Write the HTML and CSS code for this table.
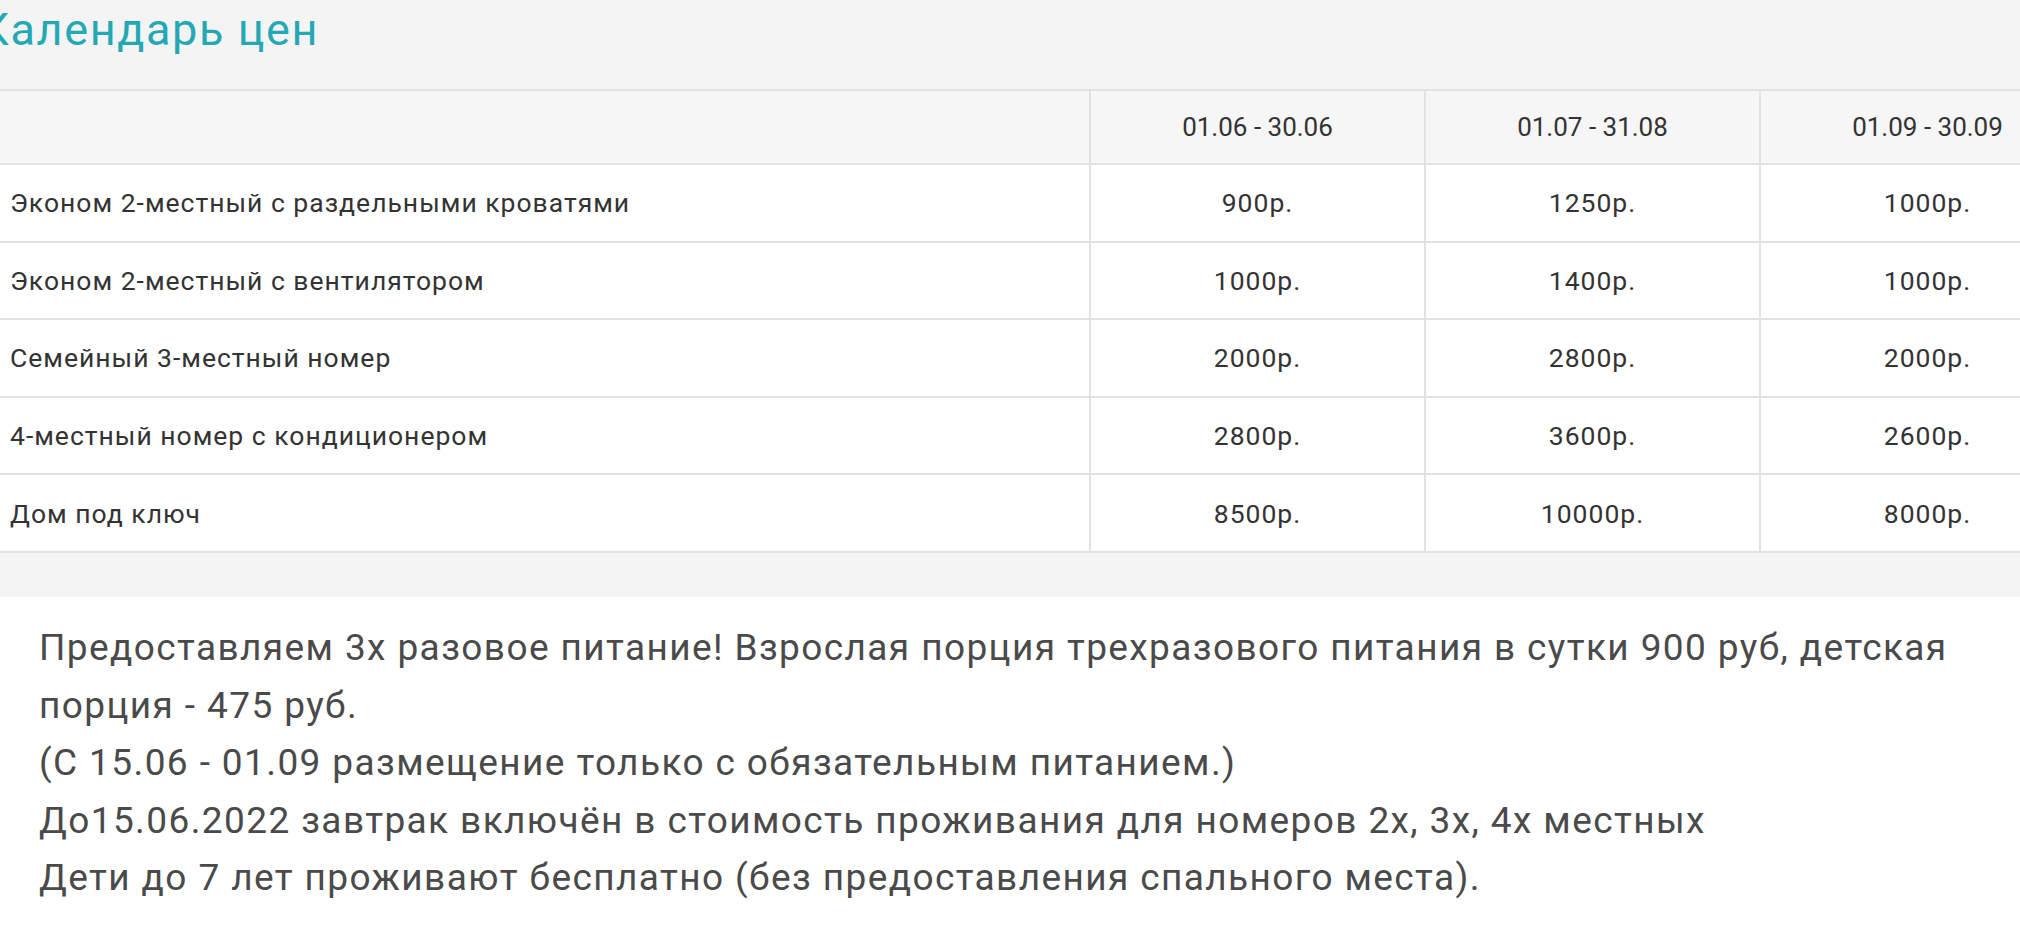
FILE: index.html
```html
<!DOCTYPE html>
<html lang="ru">
<head>
<meta charset="utf-8">
<title>Календарь цен</title>
<link rel="stylesheet" href="styles.css">
</head>
<body>
<div class="page">
  <section class="prices">
    <h2 class="prices-title">Календарь цен</h2>
    <table class="price-table">
      <colgroup>
        <col class="col-name">
        <col class="col-period">
        <col class="col-period">
        <col class="col-period">
      </colgroup>
      <thead>
        <tr>
          <th class="cell-name"></th>
          <th>01.06 - 30.06</th>
          <th>01.07 - 31.08</th>
          <th>01.09 - 30.09</th>
        </tr>
      </thead>
      <tbody>
        <tr>
          <td class="cell-name">Эконом 2-местный с раздельными кроватями</td>
          <td>900р.</td>
          <td>1250р.</td>
          <td>1000р.</td>
        </tr>
        <tr>
          <td class="cell-name">Эконом 2-местный с вентилятором</td>
          <td>1000р.</td>
          <td>1400р.</td>
          <td>1000р.</td>
        </tr>
        <tr>
          <td class="cell-name">Семейный 3-местный номер</td>
          <td>2000р.</td>
          <td>2800р.</td>
          <td>2000р.</td>
        </tr>
        <tr>
          <td class="cell-name">4-местный номер с кондиционером</td>
          <td>2800р.</td>
          <td>3600р.</td>
          <td>2600р.</td>
        </tr>
        <tr>
          <td class="cell-name">Дом под ключ</td>
          <td>8500р.</td>
          <td>10000р.</td>
          <td>8000р.</td>
        </tr>
      </tbody>
    </table>
  </section>
  <div class="notes">
    <p>Предоставляем 3х разовое питание! Взрослая порция трехразового питания в сутки 900 руб, детская порция - 475 руб.<br>
    (С 15.06 - 01.09 размещение только с обязательным питанием.)<br>
    До15.06.2022 завтрак включён в стоимость проживания для номеров 2х, 3х, 4х местных<br>
    Дети до 7 лет проживают бесплатно (без предоставления спального места).</p>
  </div>
</div>
</body>
</html>
```

FILE: styles.css
```css
html, body {
  margin: 0;
  padding: 0;
  background: #ffffff;
  overflow: hidden;
}

body {
  font-family: Roboto, "Liberation Sans", Arial, sans-serif;
  color: #333333;
}

.page {
  width: 2120px;
  margin-left: -20px;
}

.prices {
  background: #f4f4f4;
  padding-top: 3px;
  padding-bottom: 44px;
}

.prices-title {
  margin: 0 0 33px 0;
  font-size: 45px;
  font-weight: 400;
  line-height: 53px;
  letter-spacing: 1.6px;
  color: #24a8b4;
}

.price-table {
  width: 2115px;
  table-layout: fixed;
  border-collapse: collapse;
  border-top: 2px solid #e2e2e2;
}

.col-name {
  width: 1110px;
}

.col-period {
  width: 335px;
}

.price-table th,
.price-table td {
  border: 2px solid #e2e2e2;
  padding: 0 10px;
  text-align: center;
  font-weight: 400;
  vertical-align: middle;
  color: #333333;
}

.price-table thead th {
  background: #f6f6f6;
  height: 72px;
  font-size: 26px;
}

.price-table tbody td {
  background: #ffffff;
  height: 75.6px;
  font-size: 26.5px;
  letter-spacing: 1px;
}

.price-table .cell-name {
  text-align: left;
  padding-left: 30px;
  border-left: none;
}

.notes {
  padding: 22px 0 0 59px;
  width: 1952px;
}

.notes p {
  margin: 0;
  font-size: 37px;
  line-height: 57.6px;
  letter-spacing: 1.4px;
  color: #4a4a4a;
}
```
